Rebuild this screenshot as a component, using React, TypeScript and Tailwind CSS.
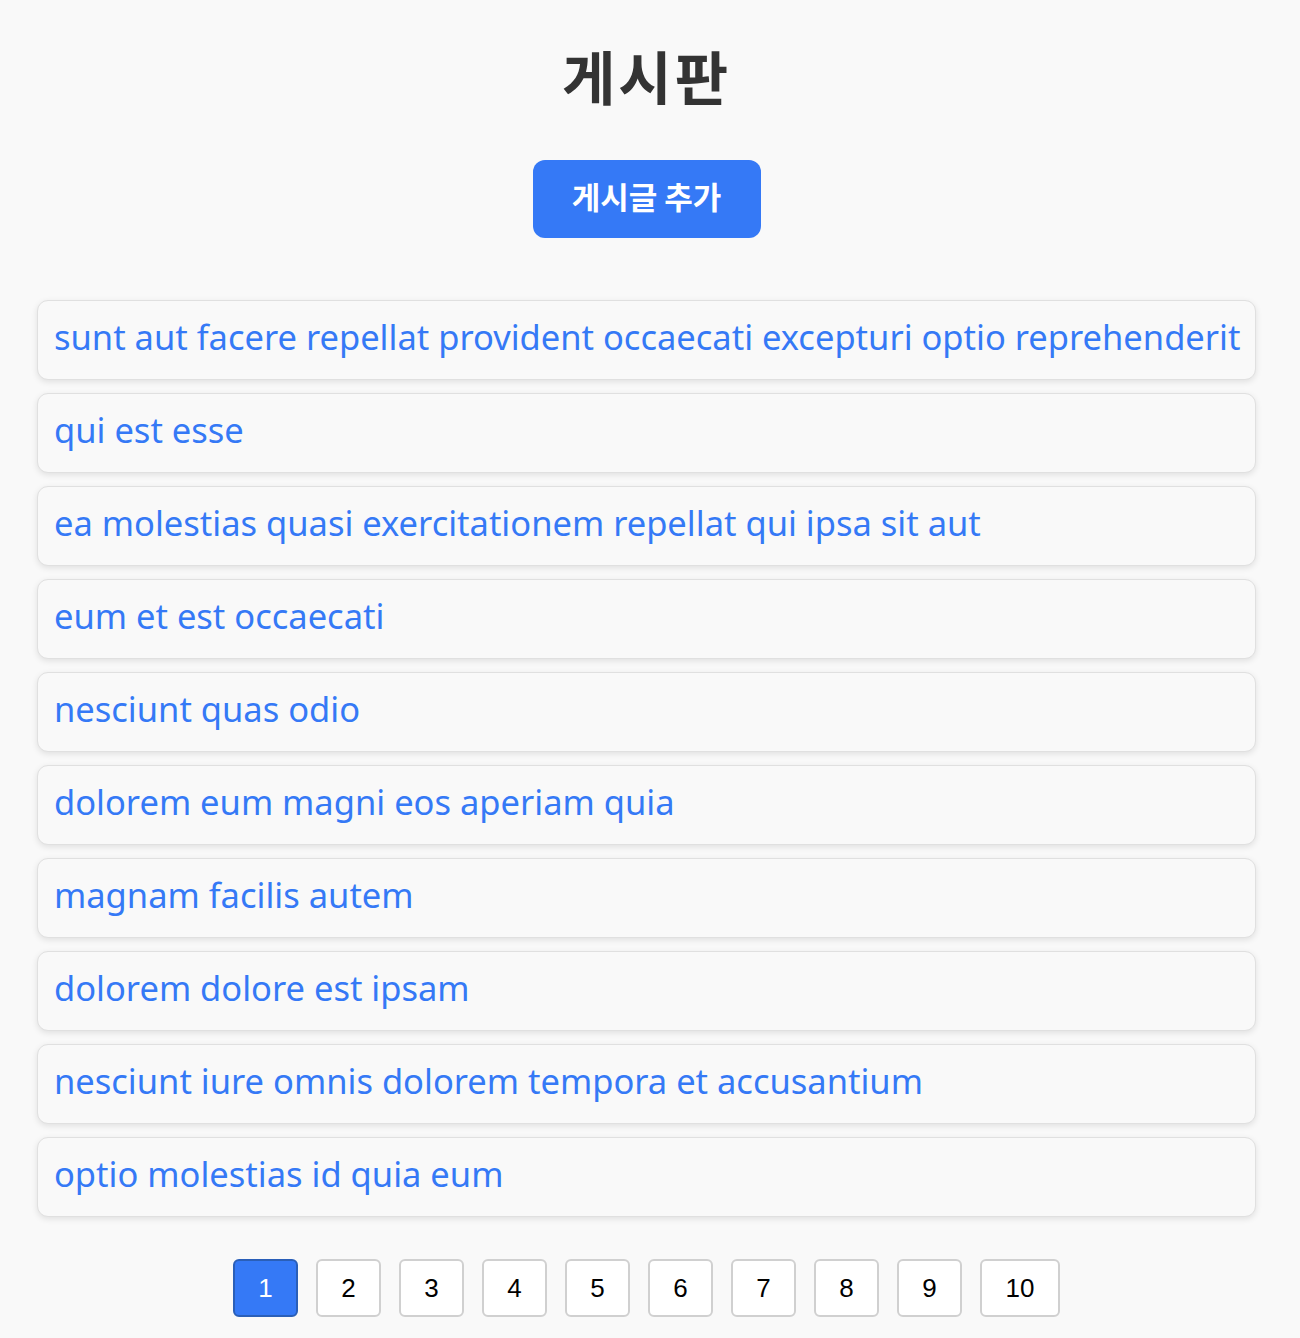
import React from "react";

const titles = [
  "sunt aut facere repellat provident occaecati excepturi optio reprehenderit",
  "qui est esse",
  "ea molestias quasi exercitationem repellat qui ipsa sit aut",
  "eum et est occaecati",
  "nesciunt quas odio",
  "dolorem eum magni eos aperiam quia",
  "magnam facilis autem",
  "dolorem dolore est ipsam",
  "nesciunt iure omnis dolorem tempora et accusantium",
  "optio molestias id quia eum",
];

export default function App() {
  const font = { fontFamily: '"Noto Sans", "Noto Sans CJK KR", sans-serif' };
  return (
    <div className="min-h-[1338px] bg-[#f9f9f9] pl-[37px] pr-[44px]" style={font}>
      <h1
        className="pt-[40px] pb-[3px] text-center text-[58px] font-bold leading-[70px] tracking-[3px] text-[#333]"
        style={{ fontFamily: '"Noto Sans CJK KR", sans-serif' }}
      >
        게시판
      </h1>
      <div className="mt-[47px] flex justify-center">
        <button
          className="h-[78px] w-[228px] rounded-[12px] bg-[#3579f6] pb-[5px] text-[31px] font-bold text-white"
          style={{ fontFamily: '"Noto Sans CJK KR", sans-serif' }}
        >
          게시글 추가
        </button>
      </div>
      <ul className="mt-[62px] flex flex-col gap-[13px]">
        {titles.map((t) => (
          <li
            key={t}
            className="flex h-[80px] items-center rounded-[11px] border border-[#e0e0e0] bg-[#f9f9f9] px-[16px] pb-[5px] shadow-[0_2px_6px_rgba(0,0,0,0.1)]"
          >
            <span className="whitespace-nowrap text-[34.5px] leading-none text-[#3579f6]">{t}</span>
          </li>
        ))}
      </ul>
      <div className="mt-[42px] flex justify-center gap-[18px]" style={{ fontFamily: '"Liberation Sans", Arial, sans-serif' }}>
        {Array.from({ length: 10 }, (_, i) => i + 1).map((n) => (
          <button
            key={n}
            className={
              (n === 10 ? "w-[80px] " : "w-[65px] ") +
              (n === 1
                ? "h-[58px] rounded-[6px] border-2 border-[#2a5fb8] bg-[#3579f6] text-[26px] text-white"
                : "h-[58px] rounded-[6px] border-2 border-[#d0d0d0] bg-white text-[26px] text-black")
            }
          >
            {n}
          </button>
        ))}
      </div>
    </div>
  );
}
